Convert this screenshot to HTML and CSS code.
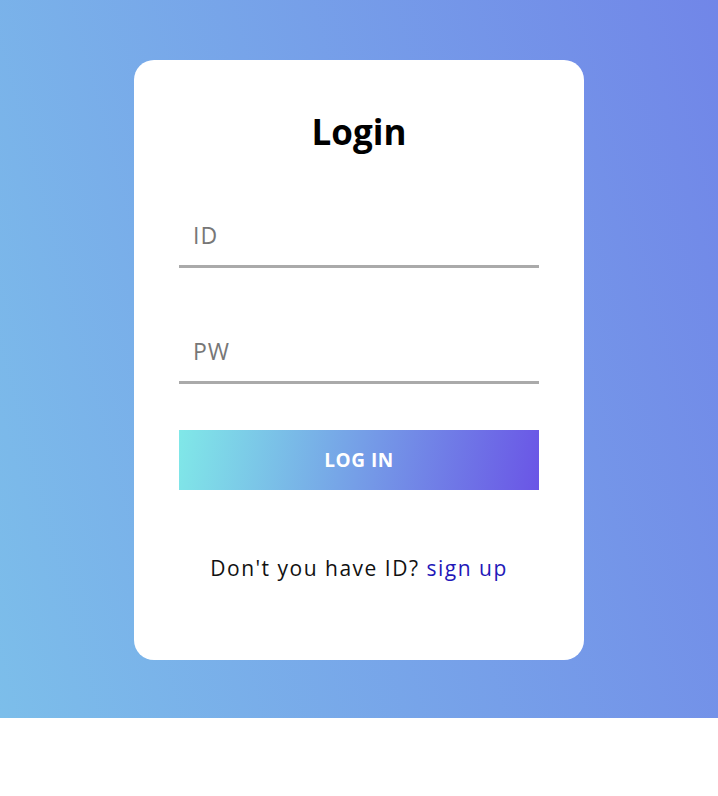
FILE: index.html
```html
<!DOCTYPE html>
<html lang="en">
<head>
<meta charset="utf-8">
<title>Login</title>
<link rel="stylesheet" href="styles.css">
</head>
<body>
<div class="bg">
  <form class="card">
    <h1 class="title">Login</h1>
    <input class="field" type="text" placeholder="ID">
    <input class="field field-pw" type="password" placeholder="PW">
    <button class="btn" type="button">LOG IN</button>
    <p class="signup">Don't you have ID? <a href="#" class="link">sign up</a></p>
  </form>
</div>
</body>
</html>
```
FILE: styles.css
```css
* { box-sizing: border-box; }
html, body { margin: 0; padding: 0; background: #fff; }
body { font-family: "Open Sans", "Noto Sans", "Noto Sans CJK KR", sans-serif; }

.bg {
  height: 718px;
  padding-top: 60px;
  display: flex;
  justify-content: center;
  align-items: flex-start;
  background: linear-gradient(75deg, #7cbeea 0%, #7186e8 100%);
}

.card {
  width: 450px;
  height: 600px;
  background: #fff;
  border-radius: 20px;
  display: flex;
  flex-direction: column;
  align-items: center;
  padding-top: 52px;
}

.title {
  margin: 0;
  font-size: 35px;
  line-height: 40px;
  font-weight: 700;
  color: #000;
}

.field {
  display: block;
  width: 360px;
  height: 50px;
  margin-top: 66px;
  padding: 0 14px 14px;
  border: 0;
  border-bottom: 3px solid #aaaaaa;
  outline: none;
  background: transparent;
  font-family: inherit;
  font-size: 23px;
  letter-spacing: 1px;
  color: #333;
}
.field::placeholder { color: #777; }

.btn {
  display: block;
  width: 360px;
  height: 60px;
  margin-top: 46px;
  border: 0;
  background: linear-gradient(100deg, #80e8e8 0%, #6a55e6 100%);
  color: #fff;
  font-family: inherit;
  font-size: 19px;
  font-weight: 700;
  letter-spacing: 0.5px;
  cursor: pointer;
}

.signup {
  margin: 63px 0 0;
  font-size: 21px;
  line-height: 30px;
  letter-spacing: 1.5px;
  color: #111;
}
.link {
  color: #2318b8;
  text-decoration: none;
}
```
